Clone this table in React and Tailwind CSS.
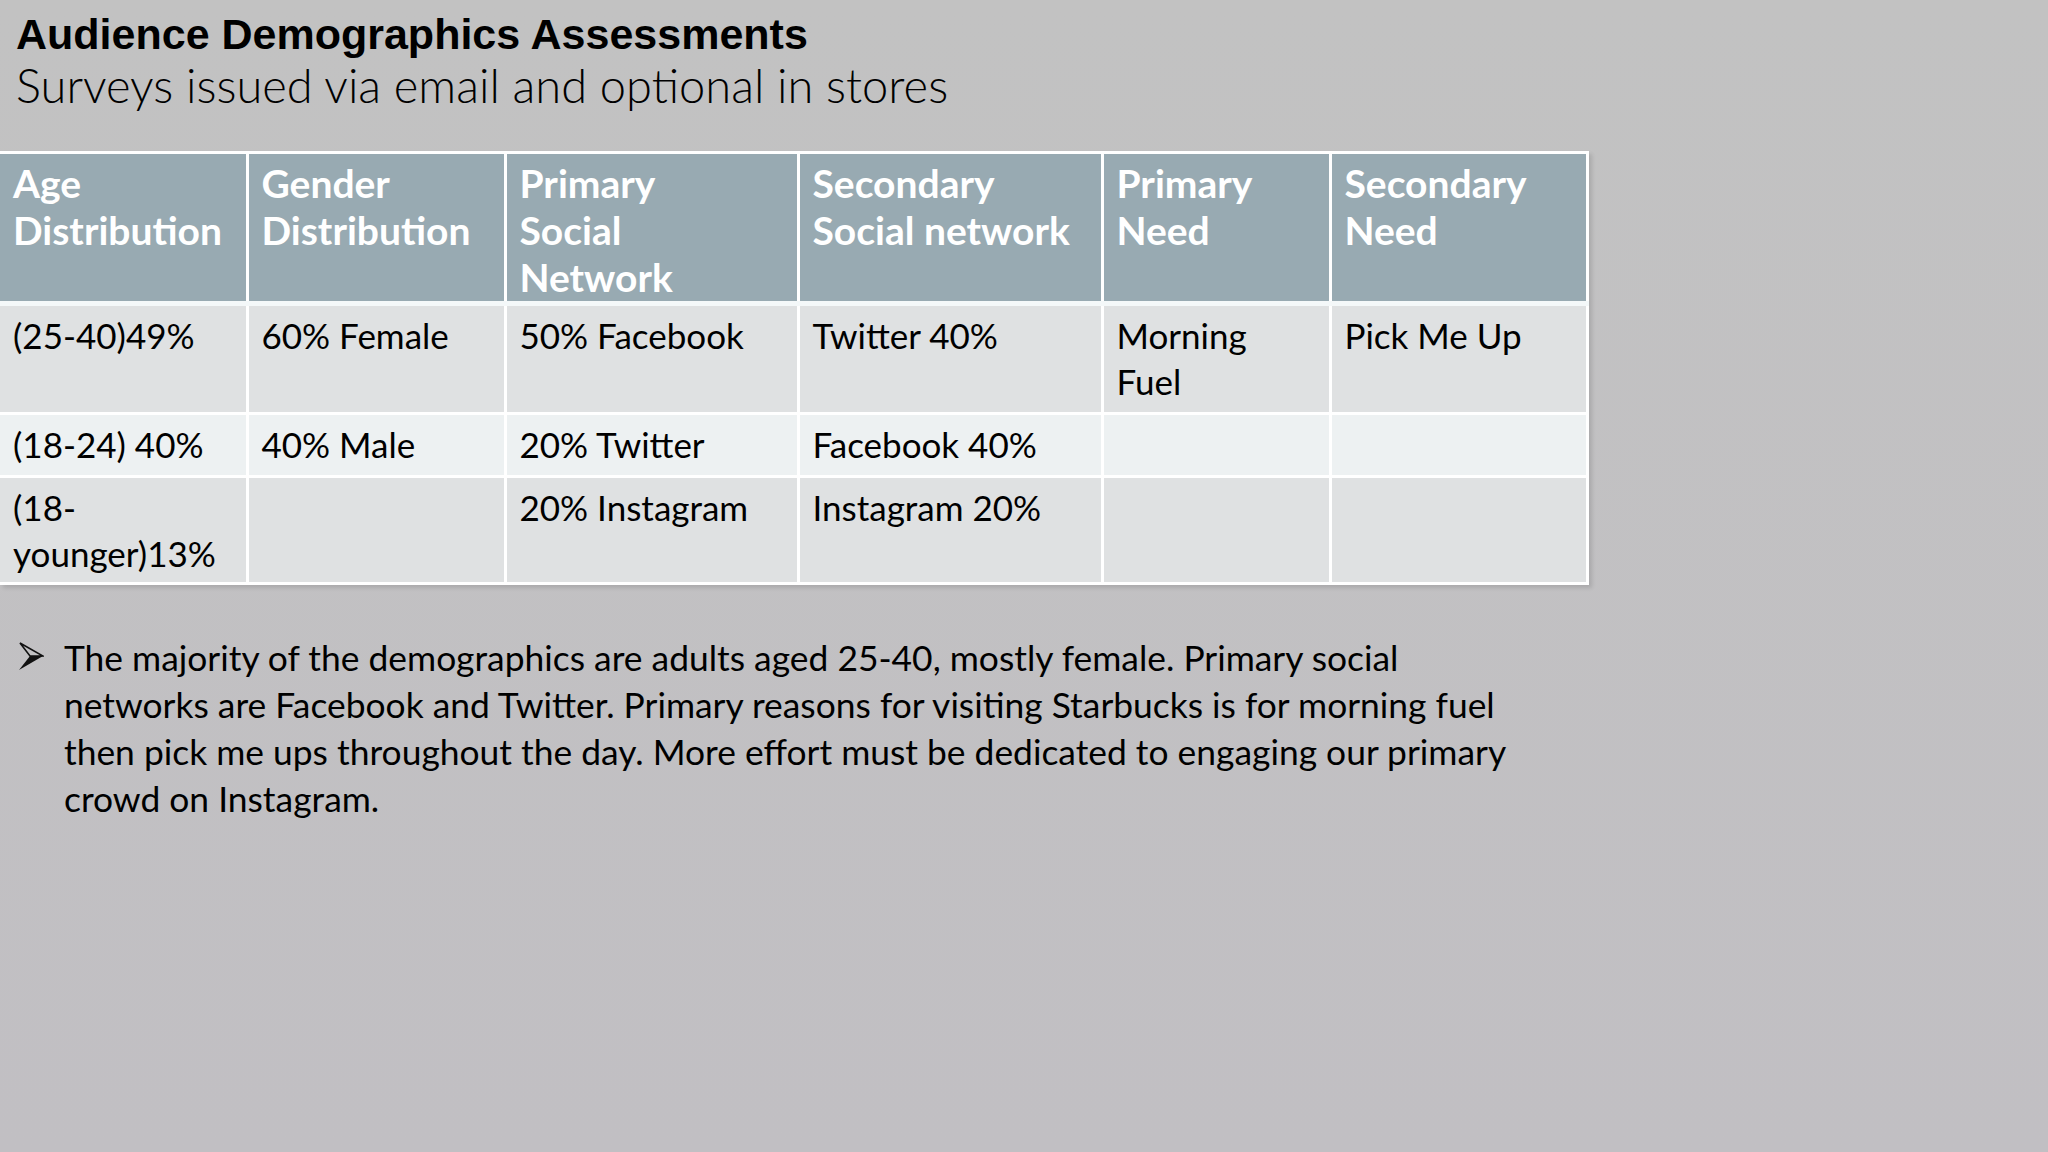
const head = [
  ["Age", "Distribution"],
  ["Gender", "Distribution"],
  ["Primary", "Social", "Network"],
  ["Secondary", "Social network"],
  ["Primary", "Need"],
  ["Secondary", "Need"],
];

const rows = [
  { bg: "bg-[#dfe1e2]", h: "h-[110px]", cells: ["(25-40)49%", "60% Female", "50% Facebook", "Twitter 40%", "Morning Fuel", "Pick Me Up"] },
  { bg: "bg-[#edf1f2]", h: "h-[63px]", cells: ["(18-24) 40%", "40% Male", "20% Twitter", "Facebook 40%", "", ""] },
  { bg: "bg-[#dfe1e2]", h: "h-[107px]", cells: ["(18- younger)13%", "", "20% Instagram", "Instagram 20%", "", ""] },
];

const widths = ["w-[247px]", "w-[258px]", "w-[293px]", "w-[304px]", "w-[228px]", "w-[257px]"];

function Bullet() {
  return (
    <svg width="26" height="30" viewBox="0 0 26 30" className="shrink-0 mt-[8px]">
      <path d="M2 1 L25 14 L12 14 Z" fill="none" stroke="#111" strokeWidth="1.6" strokeLinejoin="miter" />
      <path d="M25 14 L1 28 L12 14 Z" fill="#111" />
    </svg>
  );
}

export default function App() {
  return (
    <div className="w-[2048px] h-[1152px] bg-gradient-to-b from-[#c2c2c2] to-[#c1bfc3] text-black overflow-hidden font-['Lato',sans-serif]">
      {/* TITLE */}
      <div className="pl-[16px] pt-[8px]">
        <h1 className="font-['Liberation_Sans',sans-serif] font-bold text-[43px] leading-[52px]">
          Audience Demographics Assessments
        </h1>
        <p className="font-['Lato',sans-serif] font-light text-[47px] leading-[50px]">
          Surveys issued via email and optional in stores
        </p>
      </div>

      {/* TABLE */}
      <table className="mt-[41px] table-fixed border-collapse w-[1587px] text-[35px] leading-[46px] shadow-[3px_3px_4px_rgba(0,0,0,0.12)]">
        <thead>
          <tr className="h-[150px] bg-[#98aab2] border-b-[5px] border-[#f4f8f9]">
            {head.map((t, i) => (
              <th
                key={i}
                className={`${widths[i]} align-top text-left font-bold text-white text-[39px] leading-[47px] whitespace-nowrap px-[13px] pt-[6px] border-t-[3px] border-r-[3px] border-white ${i === 0 ? "" : "border-l-[3px]"}`}
              >
                {t.map((line, j) => (
                  <div key={j}>{line}</div>
                ))}
              </th>
            ))}
          </tr>
        </thead>
        <tbody>
          {rows.map((r, ri) => (
            <tr key={ri} className={`${r.bg} ${r.h}`}>
              {r.cells.map((c, i) => (
                <td
                  key={i}
                  className={`align-top px-[13px] pt-[6px] border-b-[3px] border-r-[3px] border-white ${i === 0 ? "" : "border-l-[3px]"}`}
                >
                  {c}
                </td>
              ))}
            </tr>
          ))}
        </tbody>
      </table>

      {/* SUMMARY */}
      <div className="flex gap-[20px] pl-[18px] mt-[49px] text-[35.4px] leading-[47px]">
        <Bullet />
        <p>
          The majority of the demographics are adults aged 25-40, mostly female. Primary social
          <br />
          networks are Facebook and Twitter. Primary reasons for visiting Starbucks is for morning fuel
          <br />
          then pick me ups throughout the day. More effort must be dedicated to engaging our primary
          <br />
          crowd on Instagram.
        </p>
      </div>
    </div>
  );
}
